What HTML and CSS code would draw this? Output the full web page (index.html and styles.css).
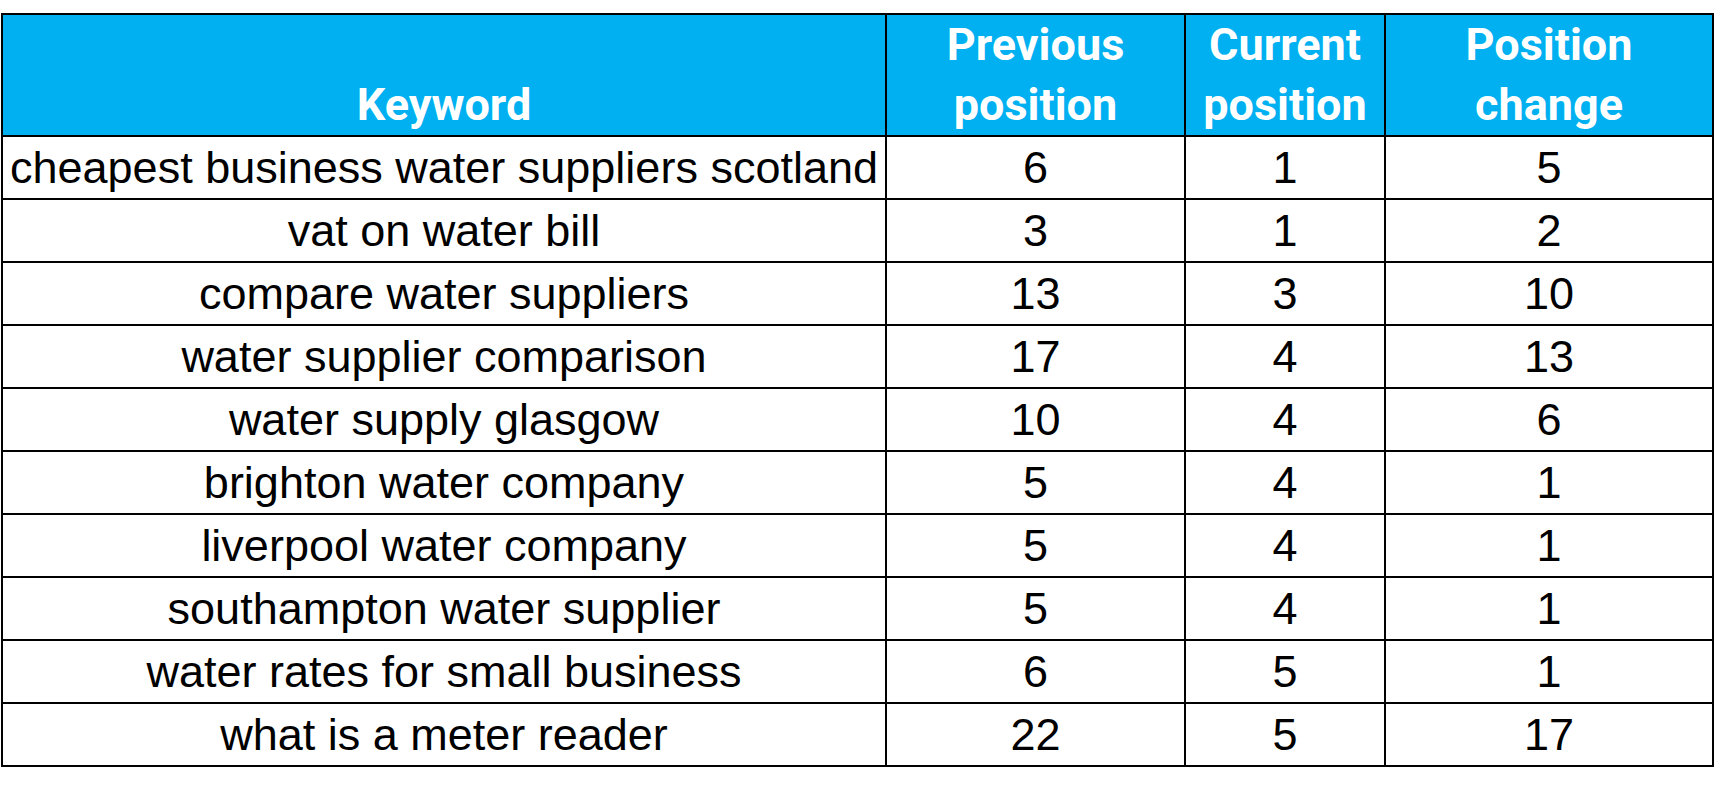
FILE: index.html
```html
<!DOCTYPE html>
<html>
<head>
<meta charset="utf-8">
<link rel="stylesheet" href="styles.css">
</head>
<body>
<table class="rank-table">
  <colgroup>
    <col class="c-kw">
    <col class="c-prev">
    <col class="c-cur">
    <col class="c-chg">
  </colgroup>
  <thead>
    <tr>
      <th>Keyword</th>
      <th>Previous<br>position</th>
      <th>Current<br>position</th>
      <th>Position<br>change</th>
    </tr>
  </thead>
  <tbody>
    <tr><td>cheapest business water suppliers scotland</td><td>6</td><td>1</td><td>5</td></tr>
    <tr><td>vat on water bill</td><td>3</td><td>1</td><td>2</td></tr>
    <tr><td>compare water suppliers</td><td>13</td><td>3</td><td>10</td></tr>
    <tr><td>water supplier comparison</td><td>17</td><td>4</td><td>13</td></tr>
    <tr><td>water supply glasgow</td><td>10</td><td>4</td><td>6</td></tr>
    <tr><td>brighton water company</td><td>5</td><td>4</td><td>1</td></tr>
    <tr><td>liverpool water company</td><td>5</td><td>4</td><td>1</td></tr>
    <tr><td>southampton water supplier</td><td>5</td><td>4</td><td>1</td></tr>
    <tr><td>water rates for small business</td><td>6</td><td>5</td><td>1</td></tr>
    <tr><td>what is a meter reader</td><td>22</td><td>5</td><td>17</td></tr>
  </tbody>
</table>
</body>
</html>
```

FILE: styles.css
```css
html, body {
  margin: 0;
  padding: 0;
  background: #ffffff;
}

body {
  padding: 13px 0 0 1px;
  font-family: "Liberation Sans", Arial, sans-serif;
  color: #000000;
}

.rank-table {
  border-collapse: collapse;
  table-layout: fixed;
  width: 1711px;
}

.c-kw { width: 884px; }
.c-prev { width: 299px; }
.c-cur { width: 200px; }
.c-chg { width: 328px; }

.rank-table th,
.rank-table td {
  border: 2px solid #000000;
  padding: 0;
  text-align: center;
  white-space: nowrap;
}

.rank-table th {
  background: #00b0f0;
  color: #ffffff;
  font-family: "Roboto", "Liberation Sans", sans-serif;
  font-weight: 700;
  font-size: 45px;
  line-height: 60px;
  vertical-align: bottom;
}

.rank-table td {
  font-size: 45px;
  line-height: 61px;
  vertical-align: middle;
}
```
